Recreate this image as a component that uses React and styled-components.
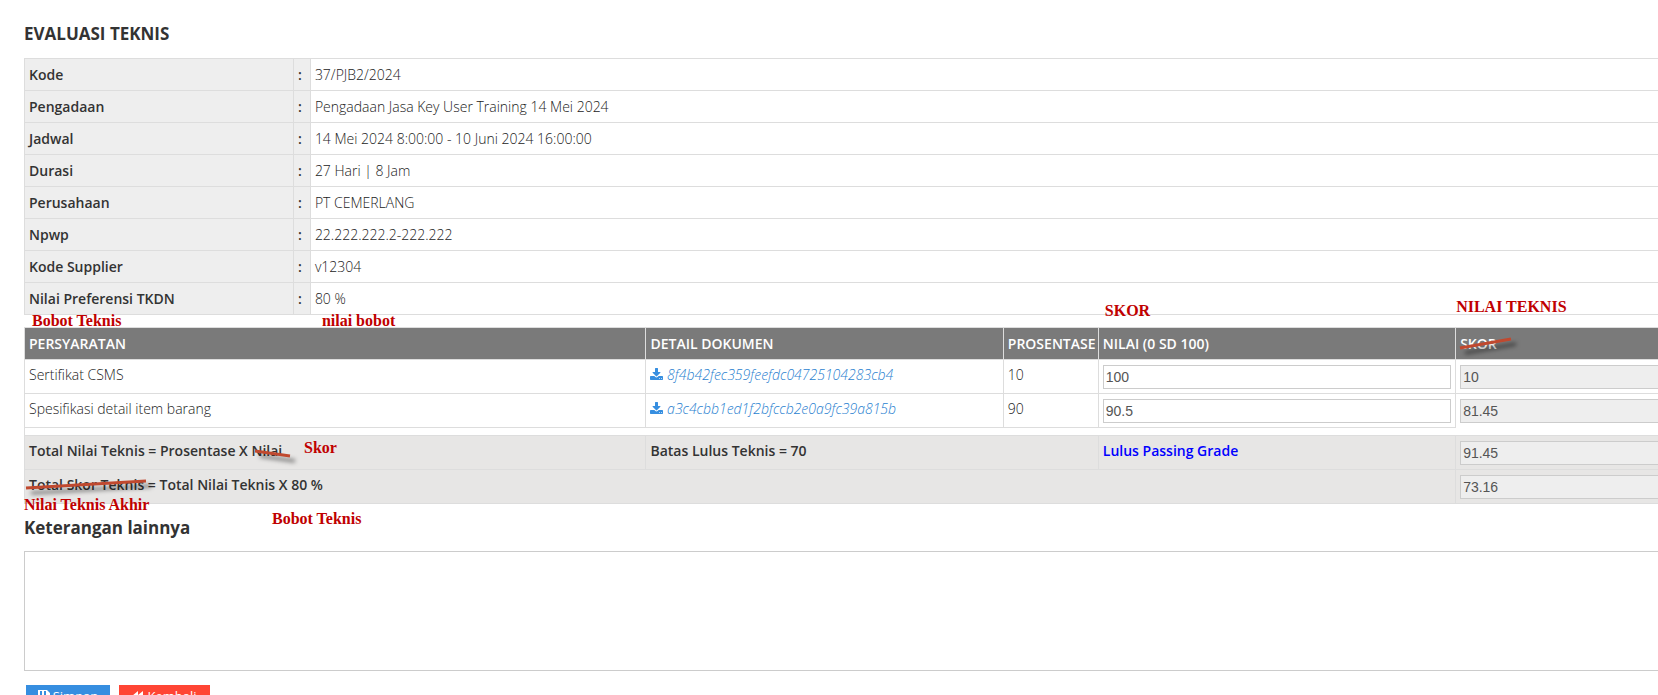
import React from "react";
import styled, { createGlobalStyle, css } from "styled-components";

const GlobalStyle = createGlobalStyle`
  *, *::before, *::after { box-sizing: border-box; }
  body {
    margin: 0;
    background: #fff;
    color: #222;
    font: 300 14px/20px "Open Sans", sans-serif;
  }
`;

const Viewport = styled.div`
  height: 100vh;
  overflow: auto;
  scrollbar-width: none;
`;

/* The form is wider than its window and scrolls sideways. */
const Page = styled.main`
  width: calc(100% + 136px);
  padding: 24px 0 24px 24px;
`;

const Heading = styled.h1`
  margin: 0;
  padding-bottom: 14px;
  color: #333;
  font-size: 17px;
  line-height: 20px;
  font-weight: 700;
`;

const SubHeading = styled.h2`
  margin: 0;
  padding: 14px 0 13px;
  color: #333;
  font-size: 17px;
  line-height: 20px;
  font-weight: 700;
`;

const Table = styled.table`
  width: 100%;
  margin-bottom: 12px;
  table-layout: fixed;
  border-collapse: collapse;
`;

const cell = css`
  position: relative;
  border: 1px solid #ddd;
  padding: 6px 4px 5px;
  text-align: left;
  vertical-align: top;
`;

const InfoLabel = styled.th`
  ${cell}
  background: #eee;
  color: #333;
  font-weight: 600;
`;

const InfoValue = styled.td`
  ${cell}
`;

const ScoreTable = styled(Table)`
  margin-bottom: 0;
`;

const Head = styled.th`
  ${cell}
  background: #7a7a7a;
  color: #fff;
  font-weight: 600;
  white-space: nowrap;
`;

const Cell = styled.td`
  ${cell}
  padding: 5px 4px 4px;
  ${(p) => p.$openBottom && "border-bottom: 0;"}
`;

const Spacer = styled.td`
  height: 8px;
  padding: 0;
  border: 1px solid #ddd;
  ${(p) => (p.$last ? "border-top: 0; border-left: 0;" : "border-right: 0;")}
`;

const TotalCell = styled(Cell)`
  background: #e7e6e5;
  color: #333;
  font-weight: 600;
`;

const Passed = styled.span`
  color: #00f;
`;

const FileLink = styled.a`
  color: #2a7fd0;
  font-style: italic;
  text-decoration: none;
`;

const DownloadGlyph = styled.svg`
  width: 13px;
  height: 14px;
  fill: #368ee0;
  vertical-align: -2px;
`;

const ScoreInput = styled.input`
  display: block;
  width: 100%;
  height: 24px;
  padding: 0 2px;
  border: 1px solid #ccc;
  border-radius: 0;
  background: ${(p) => (p.readOnly ? "#eee" : "#fff")};
  color: #555;
  font: 14px "Liberation Sans", Arial, sans-serif;
`;

const Notes = styled.textarea`
  display: block;
  width: 100%;
  height: 120px;
  border: 1px solid #ccc;
  resize: none;
  font: inherit;
`;

const Actions = styled.div`
  display: flex;
  gap: 9px;
  padding: 14px 2px;
`;

const Button = styled.button`
  display: flex;
  align-items: center;
  justify-content: center;
  gap: 3px;
  width: ${(p) => (p.$danger ? 91 : 84)}px;
  height: 22px;
  padding: 0;
  border: 0;
  background: ${(p) => (p.$danger ? "#ff4534" : "#368ee0")};
  color: #fff;
  font: 400 13px/20px "Open Sans", sans-serif;
`;

const ButtonGlyph = styled.svg`
  width: 12px;
  height: 12px;
  fill: currentColor;
`;

/* Reviewer's remarks, laid over the form. */
const Remark = styled.span`
  position: absolute;
  z-index: 1;
  left: ${(p) => p.$x}px;
  top: ${(p) => p.$y}px;
  color: #c00000;
  font: 700 16px/20px "Liberation Serif", "Times New Roman", serif;
  white-space: nowrap;
`;

const StrikeSvg = styled.svg`
  position: absolute;
  z-index: 1;
  left: ${(p) => p.$x}px;
  top: ${(p) => p.$y}px;
  overflow: visible;
  pointer-events: none;
  filter: drop-shadow(5px 5px 2px rgba(0, 0, 0, 0.5));
`;

const Strike = ({ x, y, dx, dy }) => (
  <StrikeSvg $x={x} $y={y} width={dx} height="12" aria-hidden="true">
    <line x1="0" y1="0" x2={dx} y2={dy} stroke="#c0492f" strokeWidth="3" />
  </StrikeSvg>
);

const DownloadIcon = () => (
  <DownloadGlyph viewBox="0 0 1664 1792" aria-hidden="true">
    <path d="M1280 1344q0-26-19-45t-45-19-45 19-19 45 19 45 45 19 45-19 19-45zm256 0q0-26-19-45t-45-19-45 19-19 45 19 45 45 19 45-19 19-45zm128-224v320q0 40-28 68t-68 28h-1472q-40 0-68-28t-28-68v-320q0-40 28-68t68-28h465l135 136q58 56 136 56t136-56l136-136h464q40 0 68 28t28 68zm-325-569q17 41-14 70l-448 448q-18 19-45 19t-45-19l-448-448q-31-29-14-70 17-39 59-39h256v-448q0-26 19-45t45-19h256q26 0 45 19t19 45v448h256q42 0 59 39z" />
  </DownloadGlyph>
);

const info = [
  ["Kode", "37/PJB2/2024"],
  ["Pengadaan", "Pengadaan Jasa Key User Training 14 Mei 2024"],
  ["Jadwal", "14 Mei 2024 8:00:00 - 10 Juni 2024 16:00:00"],
  ["Durasi", "27 Hari | 8 Jam"],
  ["Perusahaan", "PT CEMERLANG"],
  ["Npwp", "22.222.222.2-222.222"],
  ["Kode Supplier", "v12304"],
  ["Nilai Preferensi TKDN", "80 %", "Bobot Teknis", "nilai bobot"],
];

const requirements = [
  ["Sertifikat CSMS", "8f4b42fec359feefdc04725104283cb4", "10", "100", "10"],
  ["Spesifikasi detail item barang", "a3c4cbb1ed1f2bfccb2e0a9fc39a815b", "90", "90.5", "81.45"],
];

export default function App() {
  return (
    <Viewport>
      <GlobalStyle />
      <Page>
        <Heading>EVALUASI TEKNIS</Heading>
        <Table>
          <colgroup>
            <col style={{ width: "15.2%" }} />
            <col style={{ width: 17 }} />
            <col />
          </colgroup>
          <tbody>
            {info.map(([label, value, labelRemark, valueRemark]) => (
              <tr key={label}>
                <InfoLabel scope="row">
                  {label}
                  {labelRemark && <Remark $x={7} $y={28}>{labelRemark}</Remark>}
                </InfoLabel>
                <InfoLabel as="td">:</InfoLabel>
                <InfoValue>
                  {value}
                  {valueRemark && <Remark $x={11} $y={28}>{valueRemark}</Remark>}
                </InfoValue>
              </tr>
            ))}
          </tbody>
        </Table>
        <ScoreTable>
          <colgroup>
            <col />
            <col style={{ width: "20.2%" }} />
            <col style={{ width: 95 }} />
            <col style={{ width: "20.2%" }} />
            <col style={{ width: "19.1%" }} />
          </colgroup>
          <thead>
            <tr>
              <Head scope="col">PERSYARATAN</Head>
              <Head scope="col">DETAIL DOKUMEN</Head>
              <Head scope="col">PROSENTASE</Head>
              <Head scope="col">
                NILAI (0 SD 100)
                <Remark $x={6} $y={-27}>SKOR</Remark>
              </Head>
              <Head scope="col">
                SKOR
                <Remark $x={0} $y={-31}>NILAI TEKNIS</Remark>
                <Strike x={4} y={20} dx={51} dy={-9} />
              </Head>
            </tr>
          </thead>
          <tbody>
            {requirements.map(([name, file, percent, mark, score], i) => (
              <tr key={file}>
                <Cell>{name}</Cell>
                <Cell>
                  <FileLink href="#">
                    <DownloadIcon /> {file}
                  </FileLink>
                </Cell>
                <Cell>{percent}</Cell>
                <Cell>
                  <ScoreInput aria-label={`Nilai ${name}`} defaultValue={mark} />
                </Cell>
                <Cell $openBottom={i === requirements.length - 1}>
                  <ScoreInput aria-label={`Skor ${name}`} value={score} readOnly />
                </Cell>
              </tr>
            ))}
            <tr>
              <Spacer colSpan={4} />
              <Spacer $last />
            </tr>
            <tr>
              <TotalCell>
                Total Nilai Teknis = Prosentase X Nilai
                <Strike x={230} y={15} dx={35} dy={5} />
                <Remark $x={279} $y={2}>Skor</Remark>
              </TotalCell>
              <TotalCell colSpan={2}>Batas Lulus Teknis = 70</TotalCell>
              <TotalCell>
                <Passed>Lulus Passing Grade</Passed>
              </TotalCell>
              <TotalCell>
                <ScoreInput aria-label="Total Nilai Teknis" value="91.45" readOnly />
              </TotalCell>
            </tr>
            <tr>
              <TotalCell colSpan={4}>
                Total Skor Teknis = Total Nilai Teknis X 80 %
                <Strike x={1} y={18} dx={120} dy={-7} />
                <Remark $x={-1} $y={25}>Nilai Teknis Akhir</Remark>
                <Remark $x={247} $y={39}>Bobot Teknis</Remark>
              </TotalCell>
              <TotalCell>
                <ScoreInput aria-label="Total Skor Teknis" value="73.16" readOnly />
              </TotalCell>
            </tr>
          </tbody>
        </ScoreTable>
        <SubHeading id="notes-title">Keterangan lainnya</SubHeading>
        <Notes aria-labelledby="notes-title" />
        <Actions>
          <Button type="button">
            <ButtonGlyph viewBox="0 0 12 12" aria-hidden="true">
              <path fillRule="evenodd" d="M0 0h9l3 3v9H0zM2 1v4h2V1zM6 1v4h2V1zM2 7v4h8V7z" />
            </ButtonGlyph>
            Simpan
          </Button>
          <Button type="button" $danger>
            <ButtonGlyph viewBox="0 0 12 12" aria-hidden="true">
              <path d="M6 1v4l5-4v10L6 7v4L0 6z" />
            </ButtonGlyph>
            Kembali
          </Button>
        </Actions>
      </Page>
    </Viewport>
  );
}
